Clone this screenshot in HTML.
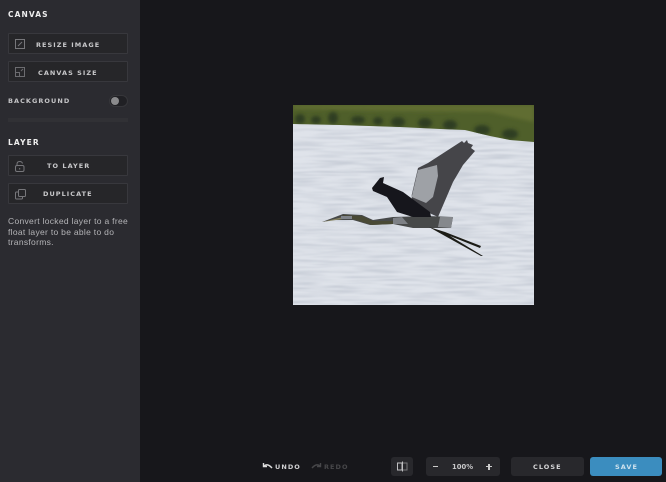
<!DOCTYPE html>
<html><head><meta charset="utf-8"><style>
html,body{margin:0;padding:0;width:666px;height:482px;overflow:hidden;background:#17171b}
*{box-sizing:border-box}
body{font-family:"DejaVu Sans","Liberation Sans",sans-serif;position:relative}
.a{position:absolute;white-space:nowrap}
.side{left:0;top:0;width:140px;height:482px;background:#2b2b30}
.h{font-weight:700;font-size:7.5px;letter-spacing:1.1px;color:#eee;line-height:10px}
.btn{left:8px;width:120px;height:21px;background:#262629;border:1px solid #38383d;border-radius:1px}
.bt{font-weight:700;font-size:6.500px;letter-spacing:1.05px;color:#c8c8ca;line-height:10px;text-align:center}
.bb{top:457px;height:19px;border-radius:3px;background:#28282c}
svg.i{position:absolute;overflow:visible}
</style></head><body>
<div class="a side"></div>
<div class="a h" style="left:8px;top:10px">CANVAS</div>

<div class="a btn" style="top:33px"></div>
<svg class="i" style="left:15px;top:39px" width="10" height="10" fill="none" stroke="#77777b"><rect x=".5" y=".5" width="9" height="9"/><path d="M3 7L7 3"/></svg>
<div class="a bt" style="left:36px;top:40px">RESIZE IMAGE</div>

<div class="a btn" style="top:61px"></div>
<svg class="i" style="left:15px;top:67px" width="10" height="10" fill="none" stroke="#6c6c70"><rect x=".5" y=".5" width="9" height="9"/><path d="M.5 5.500H4.500V9.500M6 4L8 2"/></svg>
<div class="a bt" style="left:38px;top:68px">CANVAS SIZE</div>

<div class="a bt" style="left:8px;top:96px;color:#c4c4c6">BACKGROUND</div>
<div class="a" style="left:109px;top:95px;width:19px;height:12px;border-radius:6px;background:#202024;border:1px solid #36363a"></div>
<div class="a" style="left:111px;top:97px;width:8px;height:8px;border-radius:50%;background:#8a8a8c"></div>
<div class="a" style="left:8px;top:118px;width:120px;height:4px;background:#313135"></div>

<div class="a h" style="left:8px;top:138px">LAYER</div>

<div class="a btn" style="top:155px"></div>
<svg class="i" style="left:15px;top:161px" width="10" height="11" fill="none" stroke="#77777b"><rect x=".5" y="4.500" width="8.500" height="6" rx="1.500"/><path d="M2 4.500V3Q2 .5 4.700 .5Q7 .5 7.500 2.500M4.700 7V8.500"/></svg>
<div class="a bt" style="left:47px;top:161px">TO LAYER</div>

<div class="a btn" style="top:183px"></div>
<svg class="i" style="left:15px;top:189px" width="11" height="11" fill="none" stroke="#77777b"><rect x="3.500" y=".5" width="7" height="7" rx="1"/><path d="M3.500 3H1.500Q.5 3 .5 4V9Q.5 10 1.500 10H6.500Q7.500 10 7.500 9V7.500"/></svg>
<div class="a bt" style="left:43px;top:189px">DUPLICATE</div>

<div class="a" style="left:8px;top:216px;font-family:'Liberation Sans',sans-serif;font-size:8.500px;line-height:10.700px;letter-spacing:.3px;color:#b4b4b7">Convert locked layer to a free<br>float layer to be able to do<br>transforms.</div>

<svg class="a" style="left:293px;top:105px" width="241" height="200" viewBox="293 105 241 200">
<defs>
<filter id="w" x="0" y="0" width="100%" height="100%"><feTurbulence type="fractalNoise" baseFrequency="0.025 0.38" numOctaves="2" seed="4"/><feColorMatrix values="0 0 0 0 .42  0 0 0 0 .46  0 0 0 0 .54  1.100 0 0 0 -.42"/><feGaussianBlur stdDeviation=".4"/></filter>
<filter id="b"><feGaussianBlur stdDeviation=".35"/></filter>
<filter id="b2"><feGaussianBlur stdDeviation="1.800"/></filter>
<clipPath id="c"><path d="M293 105H534V142L510 140L490 136L465 130L440 129L400 127L340 125L293 124Z"/></clipPath>
</defs>
<rect x="293" y="105" width="241" height="200" fill="#dfe3ea"/>
<rect x="293" y="120" width="241" height="185" filter="url(#w)"/>
<path d="M293 105H534V142L510 140L490 136L465 130L440 129L400 127L340 125L293 124Z" fill="#4f5e2a" filter="url(#b)"/>
<g clip-path="url(#c)">
<path d="M293 105H534V122L490 112L400 111L293 109Z" fill="#616d30" filter="url(#b2)"/>
<g fill="#2f3e20" filter="url(#b2)">
<ellipse cx="300" cy="119" rx="5" ry="5"/><ellipse cx="316" cy="120" rx="5" ry="4"/><ellipse cx="333" cy="118" rx="5" ry="6"/><ellipse cx="358" cy="120" rx="7" ry="4"/><ellipse cx="378" cy="121" rx="5" ry="4"/><ellipse cx="398" cy="122" rx="7" ry="5"/><ellipse cx="425" cy="123" rx="7" ry="5"/><ellipse cx="450" cy="125" rx="7" ry="5"/><ellipse cx="482" cy="130" rx="8" ry="5"/><ellipse cx="510" cy="134" rx="8" ry="5"/>
</g></g>
<g filter="url(#b)">
<path d="M411.700 195L418 168L428 163L462 141L464 143L467 140L468 143L473 145L471 148L475 151L463 165L453 182L438 217L412 205Z" fill="#44444a"/>
<path d="M411.700 197L418 170L437 165L438 176L433 197L426 203Z" fill="#9ea1a6"/>
<path d="M322 222L343 214L362 215L373 220L393 217L427 216L453 217L451 228L430 228L413 228L393 224L370 225L353 220L333 220Z" fill="#46484a"/>
<path d="M440 217L453 217L451 228L438 227Z" fill="#85888c"/>
<path d="M393 218L402 217L408 224L393 224Z" fill="#7d8085"/>
<path d="M343 215L362 216L373 221L393 221L393 224L372 225L353 219L341 218Z" fill="#4a4a34"/>
<path d="M322 222L343 217L343 219Z" fill="#87835f"/>
<path d="M341 216L352 216L352 219L341 219Z" fill="#80848a"/>
<path d="M372 188L380 178L384 177L383 183L403 192L430 212L431 217L413 217L397 212L387 197L373 191Z" fill="#17171b"/>
<path d="M429 227L445 232L481 246L480 248L450 236L483 256L481 256L445 236Z" fill="#1c1c18"/>
</g>
</svg>

<svg class="i" style="left:262px;top:462px" width="11" height="8" fill="none" stroke="#ddd" stroke-width="1.400"><path d="M1.500 1V4.500H5M1.500 4.500Q5 .5 10 6"/></svg>
<div class="a bt" style="left:275px;top:462px;color:#d0d0d2">UNDO</div>
<svg class="i" style="left:311px;top:462px" width="11" height="8" fill="none" stroke="#47474a" stroke-width="1.400"><path d="M9.500 1V4.500H6M9.500 4.500Q6 .5 1 6"/></svg>
<div class="a bt" style="left:324px;top:462px;color:#47474a">REDO</div>

<div class="a bb" style="left:391px;width:22px"></div>
<svg class="i" style="left:397px;top:461px" width="11" height="11" fill="none" stroke="#c0c0c2"><rect x=".5" y="2" width="4.500" height="7"/><path d="M5.500 .5V10.500"/><path d="M6 2H10V9H6" stroke="#77777a"/></svg>
<div class="a bb" style="left:426px;width:74px"></div>
<div class="a" style="left:433px;top:466px;width:5px;height:1.300px;background:#ccc"></div>
<div class="a" style="left:452px;top:462px;font-weight:700;font-size:6.800px;line-height:10px;letter-spacing:0;color:#c8c8ca">100%</div>
<div class="a" style="left:486px;top:466px;width:6px;height:1.300px;background:#ccc"></div>
<div class="a" style="left:488.350px;top:463.700px;width:1.300px;height:6px;background:#ccc"></div>

<div class="a bb" style="left:511px;width:73px"></div>
<div class="a bt" style="left:533px;top:462px;color:#d6d6d8">CLOSE</div>
<div class="a bb" style="left:590px;width:72px;background:#3b8dbf"></div>
<div class="a bt" style="left:615px;top:462px;color:#cfe2ee">SAVE</div>
</body></html>
